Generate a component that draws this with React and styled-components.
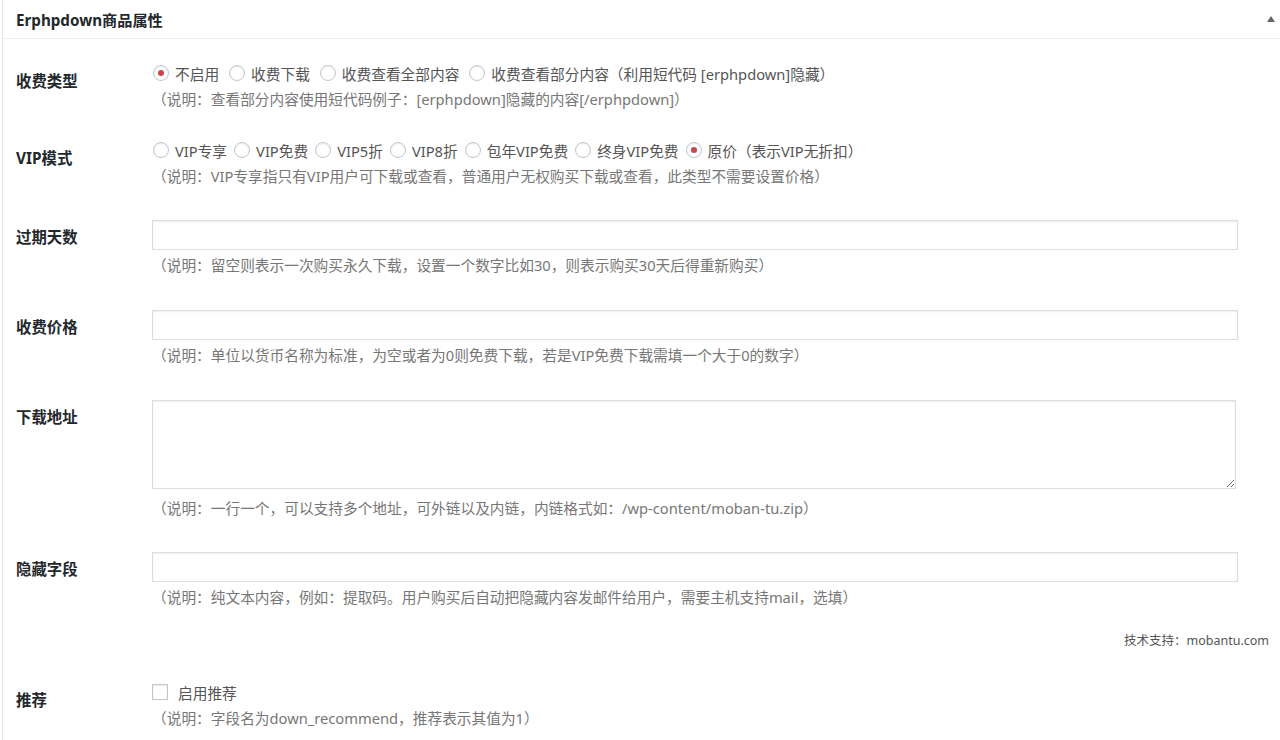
import React, { useState } from 'react';
import styled, { createGlobalStyle } from 'styled-components';

const GlobalStyle = createGlobalStyle`
  body {
    margin: 0;
    background: #fff;
    font-family: "Noto Sans", "Noto Sans CJK SC", sans-serif;
    color: #444;
  }
`;

const Page = styled.div`
  padding-left: 2px;
`;

const Box = styled.div`
  border-left: 1px solid #e5e5e5;
  min-height: 740px;
  box-sizing: border-box;
`;

const Header = styled.div`
  height: 38px;
  border-bottom: 1px solid #eee;
  display: flex;
  align-items: center;
  justify-content: space-between;
  padding: 0 5px 0 13px;
`;

const Title = styled.h2`
  margin: 0;
  font-size: 15.2px;
  font-weight: 700;
  color: #23282d;
`;

const Toggle = styled.span`
  width: 0;
  height: 0;
  border-left: 4px solid transparent;
  border-right: 4px solid transparent;
  border-bottom: 6px solid #666;
`;

const Body = styled.div`
  padding: 8px 11px 0 13px;
`;

const Row = styled.div`
  display: grid;
  grid-template-columns: 136px 1fr;
`;

const Label = styled.div`
  padding-top: 25px;
  font-size: 15.4px;
  line-height: 20px;
  font-weight: 700;
  color: #23282d;
`;

const Field = styled.div`
  padding: 15px 31px ${p => p.$bottom ?? 16}px 0;
`;

const Options = styled.div`
  display: flex;
  align-items: center;
  height: 22px;
  font-size: 14.7px;
  color: #555;
`;

const Option = styled.label`
  display: flex;
  align-items: center;
  margin-right: ${p => p.$gap ?? 9}px;
  white-space: nowrap;
`;

const Radio = styled.span`
  width: 16px;
  height: 16px;
  box-sizing: border-box;
  border-radius: 50%;
  border: 1px solid #c3c6c9;
  box-shadow: inset 0 1px 2px rgba(0, 0, 0, 0.08);
  margin: 0 6px 0 1px;
  display: flex;
  align-items: center;
  justify-content: center;
  &::before {
    content: '';
    width: 6px;
    height: 6px;
    border-radius: 50%;
    background: ${p => (p.$checked ? '#c9474b' : 'transparent')};
  }
`;

const Check = styled.span`
  width: 16px;
  height: 16px;
  box-sizing: border-box;
  border: 1px solid #c3c6c9;
  box-shadow: inset 0 1px 2px rgba(0, 0, 0, 0.08);
  margin-right: 10px;
`;

const Desc = styled.p`
  margin: ${p => p.$gap ?? 4}px 0 0;
  font-size: 14.7px;
  line-height: 22px;
  color: #777;
  white-space: nowrap;
`;

const Input = styled.input`
  display: block;
  width: 100%;
  height: 30px;
  box-sizing: border-box;
  margin: 2px 0 4px;
  border: 1px solid #ddd;
  box-shadow: inset 0 1px 2px rgba(0, 0, 0, 0.07);
  background: #fff;
  outline: none;
`;

const TextArea = styled.textarea`
  display: block;
  width: calc(100% - 2px);
  height: 89px;
  box-sizing: border-box;
  margin: 2px 0 8px;
  border: 1px solid #ddd;
  box-shadow: inset 0 1px 2px rgba(0, 0, 0, 0.07);
  background: #fff;
  outline: none;
`;

const Support = styled.div`
  text-align: right;
  font-size: 12.5px;
  line-height: 22px;
  color: #555;
  margin: 6px 0 14px;
`;

const payTypes = ['不启用', '收费下载', '收费查看全部内容', '收费查看部分内容（利用短代码 [erphpdown]隐藏）'];
const vipModes = ['VIP专享', 'VIP免费', 'VIP5折', 'VIP8折', '包年VIP免费', '终身VIP免费', '原价（表示VIP无折扣）'];

function RadioGroup({ items, value, onChange, gap }) {
  return (
    <Options>
      {items.map((item, i) => (
        <Option key={item} $gap={gap} onClick={() => onChange(i)}>
          <Radio $checked={value === i} />
          {item}
        </Option>
      ))}
    </Options>
  );
}

export default function App() {
  const [payType, setPayType] = useState(0);
  const [vipMode, setVipMode] = useState(6);

  return (
    <Page>
      <GlobalStyle />
      <Box>
        <Header>
          <Title>Erphpdown商品属性</Title>
          <Toggle />
        </Header>
        <Body>
          <Row>
            <Label>收费类型</Label>
            <Field $bottom={14}>
              <RadioGroup items={payTypes} value={payType} onChange={setPayType} />
              <Desc>（说明：查看部分内容使用短代码例子：[erphpdown]隐藏的内容[/erphpdown]）</Desc>
            </Field>
          </Row>
          <Row>
            <Label>VIP模式</Label>
            <Field>
              <RadioGroup items={vipModes} value={vipMode} onChange={setVipMode} gap={6} />
              <Desc>（说明：VIP专享指只有VIP用户可下载或查看，普通用户无权购买下载或查看，此类型不需要设置价格）</Desc>
            </Field>
          </Row>
          <Row>
            <Label>过期天数</Label>
            <Field $bottom={17}>
              <Input type="text" />
              <Desc $gap={0}>（说明：留空则表示一次购买永久下载，设置一个数字比如30，则表示购买30天后得重新购买）</Desc>
            </Field>
          </Row>
          <Row>
            <Label>收费价格</Label>
            <Field $bottom={17}>
              <Input type="text" />
              <Desc $gap={0}>（说明：单位以货币名称为标准，为空或者为0则免费下载，若是VIP免费下载需填一个大于0的数字）</Desc>
            </Field>
          </Row>
          <Row>
            <Label>下载地址</Label>
            <Field>
              <TextArea />
              <Desc $gap={0}>（说明：一行一个，可以支持多个地址，可外链以及内链，内链格式如：/wp-content/moban-tu.zip）</Desc>
            </Field>
          </Row>
          <Row>
            <Label>隐藏字段</Label>
            <Field>
              <Input type="text" />
              <Desc $gap={0}>（说明：纯文本内容，例如：提取码。用户购买后自动把隐藏内容发邮件给用户，需要主机支持mail，选填）</Desc>
            </Field>
          </Row>
          <Support>技术支持：mobantu.com</Support>
          <Row>
            <Label>推荐</Label>
            <Field>
              <Options>
                <Option>
                  <Check />
                  启用推荐
                </Option>
              </Options>
              <Desc>（说明：字段名为down_recommend，推荐表示其值为1）</Desc>
            </Field>
          </Row>
        </Body>
      </Box>
    </Page>
  );
}
